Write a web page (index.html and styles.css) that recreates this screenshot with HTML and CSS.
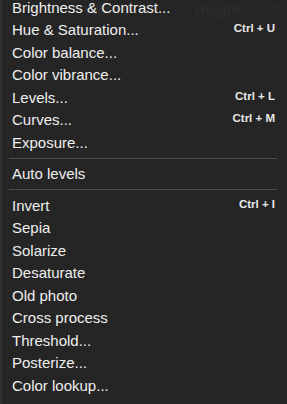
FILE: index.html
```html
<!DOCTYPE html>
<html>
<head>
    <title>Adjust menu</title>
    <meta name="viewport" content="width=device-width, initial-scale=1.0">
    <link rel="stylesheet" href="styles.css">
</head>
<body>
    <!-- toolbar behind the open menu -->
    <div class="toolbar">
        <span class="tb-label tb-width">Width:</span>
        <span class="tb-label tb-height">Height:</span>
        <span class="tb-value">0.0</span>
    </div>

    <div class="menu">
        <div class="item"><span>Brightness &amp; Contrast...</span></div>
        <div class="item"><span>Hue &amp; Saturation...</span><span class="key">Ctrl + U</span></div>
        <div class="item"><span>Color balance...</span></div>
        <div class="item"><span>Color vibrance...</span></div>
        <div class="item"><span>Levels...</span><span class="key">Ctrl + L</span></div>
        <div class="item"><span>Curves...</span><span class="key">Ctrl + M</span></div>
        <div class="item"><span>Exposure...</span></div>
        <div class="sep"></div>
        <div class="item"><span>Auto levels</span></div>
        <div class="sep"></div>
        <div class="item"><span>Invert</span><span class="key">Ctrl + I</span></div>
        <div class="item"><span>Sepia</span></div>
        <div class="item"><span>Solarize</span></div>
        <div class="item"><span>Desaturate</span></div>
        <div class="item"><span>Old photo</span></div>
        <div class="item"><span>Cross process</span></div>
        <div class="item"><span>Threshold...</span></div>
        <div class="item"><span>Posterize...</span></div>
        <div class="item"><span>Color lookup...</span></div>
    </div>
</body>
</html>
```

FILE: styles.css
```css
body {
    margin: 0;
    padding: 0;
    background-color: #252525;
    font-family: "Liberation Sans", Arial, sans-serif;
    overflow: hidden;
    position: relative;
    height: 404px;
}

.toolbar {
    height: 18px;
    display: flex;
    align-items: center;
    color: #484848;
    font-size: 15px;
}

.tb-label {
    font-weight: bold;
}

.tb-width {
    margin-left: 84px;
}

.tb-height {
    margin-left: 64px;
}

.tb-value {
    margin-left: 13px;
    font-size: 14px;
}

.menu {
    position: absolute;
    top: -4px;
    left: 0;
    right: 0;
    bottom: 0;
    border-left: 2px solid #2f2f2f;
    background-color: rgba(37, 37, 37, 0.8);
}

.item {
    height: 22.5px;
    display: flex;
    align-items: center;
    justify-content: space-between;
    padding: 0 12px 0 10px;
    color: #efefef;
    font-size: 15px;
}

.key {
    font-size: 11.5px;
    font-weight: bold;
    color: #e8e8e8;
    margin-top: -3px;
}

.sep {
    height: 1px;
    margin: 4px 10px 4px 7px;
    background-color: #4a4a4a;
}
```
